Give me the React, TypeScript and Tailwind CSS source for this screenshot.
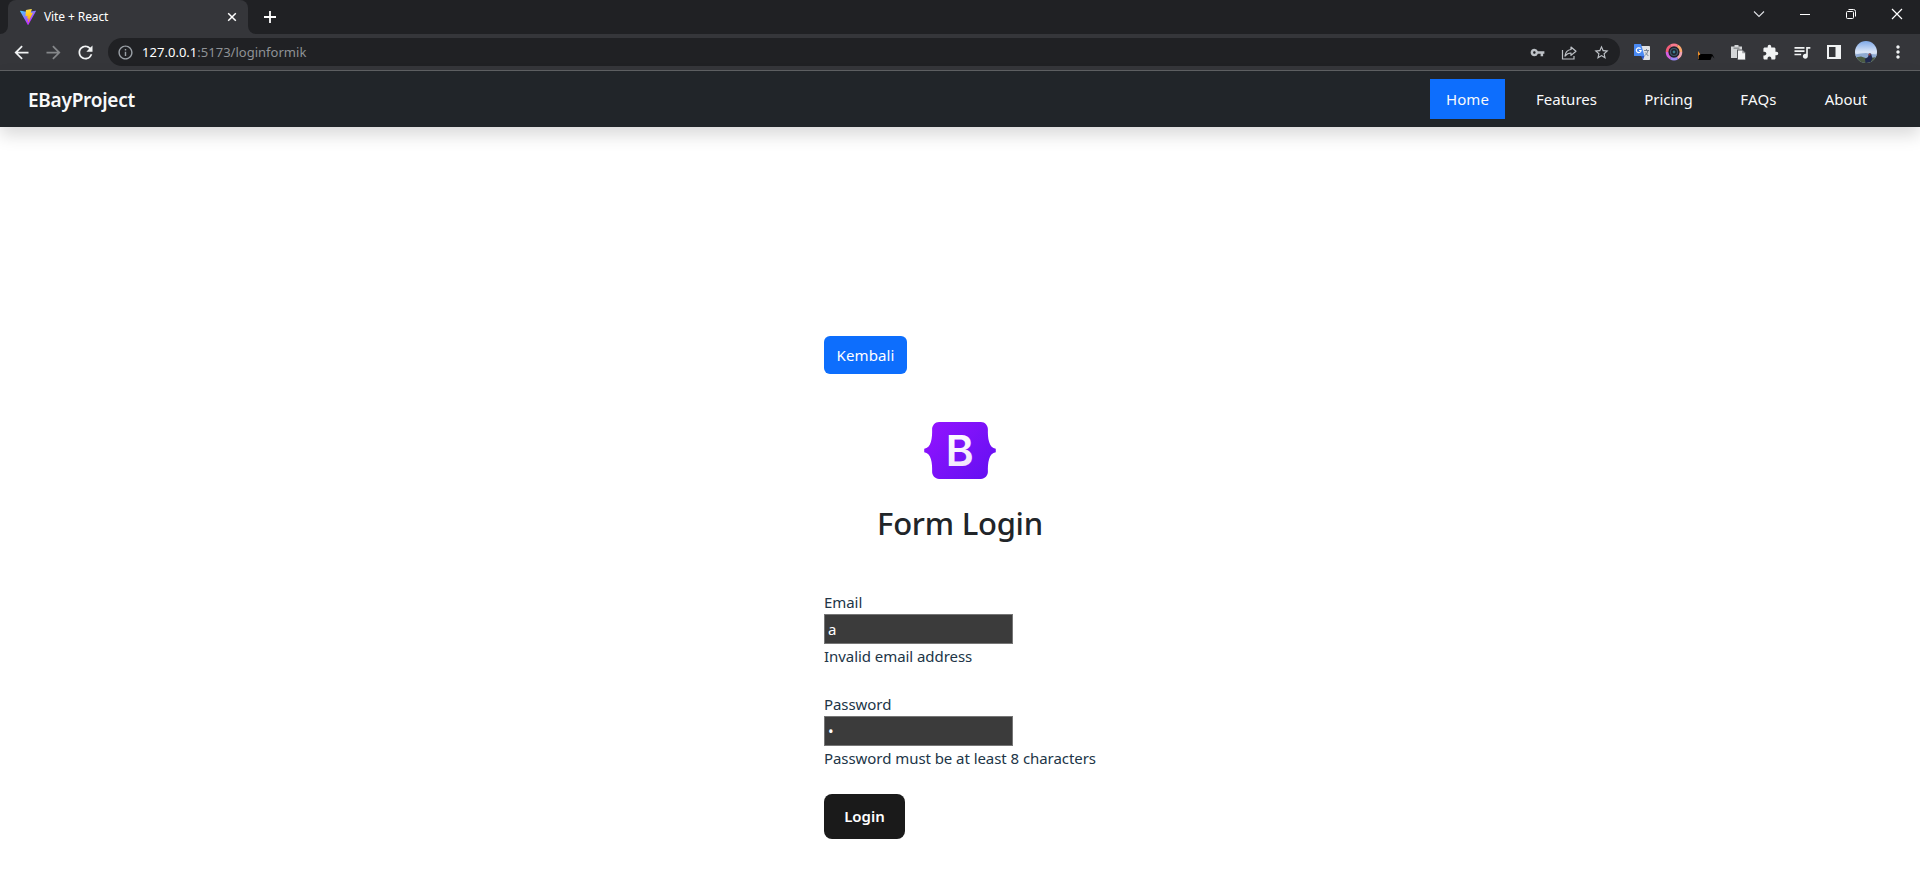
import type { ReactNode } from 'react';
import {
  MdArrowBack,
  MdArrowForward,
  MdExtension,
  MdInfoOutline,
  MdMoreVert,
  MdQueueMusic,
  MdRefresh,
  MdStarBorder,
  MdVpnKey,
} from 'react-icons/md';

function ViteLogo() {
  return (
    <svg width="16" height="16" viewBox="0 0 256 257">
      <defs>
        <linearGradient id="viteBlue" x1="0" y1="0" x2="0.58" y2="0.8">
          <stop offset="0" stopColor="#41D1FF" />
          <stop offset="1" stopColor="#BD34FE" />
        </linearGradient>
        <linearGradient id="viteYellow" x1="0.43" y1="0.02" x2="0.5" y2="0.9">
          <stop offset="0" stopColor="#FFEA83" />
          <stop offset="0.08" stopColor="#FFDD35" />
          <stop offset="1" stopColor="#FFA800" />
        </linearGradient>
      </defs>
      <path fill="url(#viteBlue)" d="M255.153 37.938 134.897 252.976c-2.483 4.44-8.862 4.466-11.382.048L.875 37.958c-2.746-4.814 1.371-10.646 6.827-9.67l120.385 21.517a6.537 6.537 0 0 0 2.322-.004l117.867-21.483c5.438-.991 9.574 4.796 6.877 9.62Z" />
      <path fill="url(#viteYellow)" d="M185.432.063 96.44 17.501a3.268 3.268 0 0 0-2.634 3.014l-5.474 92.456a3.268 3.268 0 0 0 3.997 3.378l24.777-5.718c2.318-.535 4.413 1.507 3.936 3.838l-7.361 36.047c-.495 2.426 1.782 4.5 4.151 3.78l15.304-4.649c2.372-.72 4.652 1.36 4.15 3.788l-11.698 56.621c-.732 3.542 3.979 5.473 5.943 2.437l1.313-2.028 72.516-144.72c1.215-2.423-.88-5.186-3.54-4.672l-25.505 4.922c-2.396.462-4.435-1.77-3.759-4.114l16.646-57.705c.677-2.35-1.37-4.583-3.769-4.113Z" />
    </svg>
  );
}

function BootstrapLogo() {
  return (
    <svg width="72" height="57" viewBox="0 0 118 94" className="mb-[25px]">
      <defs>
        <linearGradient id="bsBody" gradientUnits="userSpaceOnUse" x1="17" y1="2" x2="101" y2="92">
          <stop stopColor="#9013fe" />
          <stop offset="1" stopColor="#6610f2" />
        </linearGradient>
        <linearGradient id="bsLetter" gradientUnits="userSpaceOnUse" x1="42" y1="20" x2="64" y2="74">
          <stop stopColor="#ffffff" />
          <stop offset="1" stopColor="#f1e5fc" />
        </linearGradient>
      </defs>
      <path
        fill="url(#bsBody)"
        d="M24.509 0c-6.733 0-11.715 5.893-11.492 12.284.214 6.14-.064 14.092-2.066 20.577C8.943 39.365 5.547 43.485 0 44.014v5.972c5.547.529 8.943 4.649 10.951 11.153 2.002 6.485 2.28 14.437 2.066 20.577C12.794 88.106 17.776 94 24.51 94H93.5c6.733 0 11.714-5.893 11.491-12.284-.214-6.14.064-14.092 2.066-20.577 2.009-6.504 5.396-10.624 10.943-11.153v-5.972c-5.547-.529-8.934-4.649-10.943-11.153-2.002-6.484-2.28-14.437-2.066-20.577C105.214 5.894 100.233 0 93.5 0H24.508z"
      />
      <text x="35.5" y="72.3" fontSize="70" fontWeight="600" fill="url(#bsLetter)" fontFamily="Inter, sans-serif">
        B
      </text>
    </svg>
  );
}

function Cell({ children }: { children: ReactNode }) {
  return <div className="flex h-8 w-8 shrink-0 items-center justify-center">{children}</div>;
}

function TitleBar() {
  return (
    <div className="flex h-[34px] bg-[#202124] text-white">
      <div className="flex w-2 items-end bg-[#35363a]">
        <div className="h-full w-2 rounded-br-lg bg-[#202124]" />
      </div>
      <div className="bg-[#202124]">
        <div className="flex h-[34px] w-60 items-center rounded-t-lg bg-[#35363a] pr-[9px] pb-[1px] pl-3">
          <ViteLogo />
          <span className="ml-2 grow text-[12px] leading-4 tracking-[-0.1px]">Vite + React</span>
          <svg width="14" height="14" viewBox="0 0 14 14" stroke="#fff" strokeWidth="1.5" className="mt-[1px]">
            <path d="M3.200 3.200l7.600 7.600M10.800 3.200l-7.600 7.600" />
          </svg>
        </div>
      </div>
      <div className="w-2 bg-[#35363a]">
        <div className="h-full w-2 rounded-bl-lg bg-[#202124]" />
      </div>
      <div className="flex w-7 items-center justify-center">
        <svg width="14" height="14" viewBox="0 0 14 14" stroke="#fff" strokeWidth="1.8">
          <path d="M7 1v12M1 7h12" />
        </svg>
      </div>
      <div className="ml-auto flex h-7 items-center">
        <div className="flex w-[46px] justify-center">
          <svg width="12" height="12" viewBox="0 0 12 12" fill="none" stroke="#dfe1e5" strokeWidth="1.1">
            <path d="M1 3.5l5 5 5-5" />
          </svg>
        </div>
        <div className="flex w-[46px] justify-center">
          <div className="mt-[1px] h-px w-[10px] bg-white" />
        </div>
        <div className="flex w-[46px] justify-center">
          <svg width="12" height="12" viewBox="0 0 12 12" fill="none" stroke="#fff">
            <rect x="1.5" y="3.5" width="7" height="7" rx="1" />
            <path d="M3.5 1.5h5a2 2 0 0 1 2 2v5" />
          </svg>
        </div>
        <div className="flex w-[46px] justify-center">
          <svg width="12" height="12" viewBox="0 0 12 12" fill="none" stroke="#fff" strokeWidth="1.2">
            <path d="M1 1l10 10M11 1L1 11" />
          </svg>
        </div>
      </div>
    </div>
  );
}

function TranslateIcon() {
  return (
    <svg width="18" height="18" viewBox="0 0 18 18">
      <path d="M6 3h10.200q.8 0 .8.800v12.400q0 .8-.8.800H10z" fill="#dfe1e5" />
      <path d="M1.500 1H8l3.500 12H1.500q-.5 0-.5-.5v-11q0-.5.5-.5z" fill="#4a8af4" />
      <path d="M8 13h3.500L10 17z" fill="#2a56c6" />
      <path d="M7.600 5.700A2.400 2.400 0 1 0 8.100 7.500H6" fill="none" stroke="#fff" strokeWidth="1.200" />
      <path d="M11 7.500h5M13.500 6v1.500M15 7.500q-.8 3.500-3 5M12.300 9.500l3 3.500" fill="none" stroke="#7b8796" />
    </svg>
  );
}

function CameraRingIcon() {
  return (
    <svg width="18" height="18" viewBox="0 0 18 18" fill="none">
      <circle cx="9" cy="9" r="5.500" fill="#20232b" />
      <g strokeWidth="2.600">
        <path d="M2 9a7 7 0 0 1 3.500-6.060" stroke="#f25c78" />
        <path d="M5.500 2.940A7 7 0 0 1 12.500 2.940" stroke="#f9788c" />
        <path d="M12.500 2.940A7 7 0 0 1 16 9" stroke="#fba86f" />
        <path d="M16 9a7 7 0 0 1-3.500 6.060" stroke="#f0a3b4" />
        <path d="M12.500 15.060a7 7 0 0 1-7 0" stroke="#9a86f5" />
        <path d="M5.500 15.060A7 7 0 0 1 2 9" stroke="#d660e0" />
      </g>
      <circle cx="9" cy="9" r="3.500" stroke="#40586e" strokeWidth="1.200" />
      <circle cx="9" cy="9" r="1.400" fill="#3d7f93" />
    </svg>
  );
}

function HatIcon() {
  return (
    <svg width="18" height="18" viewBox="0 0 18 18">
      <path d="M1 8l2.200 3v5H1z" fill="#f0922b" />
      <path d="M1.500 12.500L4 11h10l1.500.5 2 4-2.500-2.500-1.500 4H1.500z" fill="#000" />
    </svg>
  );
}

function PasteIcon() {
  return (
    <svg width="16" height="16" viewBox="0 0 16 16">
      <path d="M1 2.500h3.500V1h4v1.500H12V14H1z" fill="#d4d6d8" />
      <path d="M3.500 3.500h6v1.300h-6z" fill="#85878a" />
      <path d="M7 5.500h5.500L16 8.500V16H7z" fill="#55575b" />
      <path d="M8 6.500h4.200L15 9.200V15.500H8z" fill="#f4f5f6" />
      <path d="M12.200 6.500V9.200H15z" fill="#9fa1a4" />
    </svg>
  );
}

function Avatar() {
  return (
    <svg width="22" height="22" viewBox="0 0 22 22">
      <defs>
        <clipPath id="avatarClip">
          <circle cx="11" cy="11" r="11" />
        </clipPath>
        <linearGradient id="sky" x1="0" y1="0" x2="0" y2="1">
          <stop stopColor="#7fa9e8" />
          <stop offset="0.5" stopColor="#dbe6f8" />
          <stop offset="1" stopColor="#8fb0d8" />
        </linearGradient>
      </defs>
      <g clipPath="url(#avatarClip)">
        <path d="M0 0h22v22H0z" fill="url(#sky)" />
        <path d="M0 13.500l6-1 5-.5 5 1 6 .5v5H0z" fill="#8faad2" />
        <path d="M0 16.500l6-1 6 2 10-1.500v7H0z" fill="#4b5a42" />
        <path d="M10 18l3-2 1-3.500h2l1.500 5-2 3.500-5 1z" fill="#20284f" />
        <circle cx="14.500" cy="13.500" r="1.100" fill="#a64a45" />
      </g>
    </svg>
  );
}

function Toolbar() {
  return (
    <div className="flex h-9 items-center bg-[#35363a] pr-1.5 pl-[5px] text-[#f1f3f4]">
      <Cell><MdArrowBack size={21} /></Cell>
      <Cell><MdArrowForward size={21} className="text-[#85878a]" /></Cell>
      <Cell><MdRefresh size={21} /></Cell>
      <div className="ml-[7px] flex h-7 grow items-center rounded-full bg-[#202124] pr-[3px] pl-[9px] text-[#bdc1c6]">
        <MdInfoOutline size={17} className="mr-2 text-[#9aa0a6]" />
        <span className="text-[13px] leading-5 tracking-[0.03px] text-white">127.0.0.1</span>
        <span className="grow text-[13px] leading-5 tracking-[0.01px] text-[#8f9296]">:5173/loginformik</span>
        <Cell><MdVpnKey size={15} /></Cell>
        <Cell>
          <svg width="16" height="16" viewBox="0 0 16 16" fill="none" stroke="currentColor" strokeWidth="1.200" className="mt-[1px]">
            <path d="M1.500 5V14h11.500V11" />
            <path d="M10 2l5 4.200-5 4.200V8Q6.500 8 4 11 4.800 5 10 4.500z" strokeLinejoin="round" />
          </svg>
        </Cell>
        <Cell><MdStarBorder size={17} /></Cell>
      </div>
      <div className="ml-1.5 flex">
        <Cell><TranslateIcon /></Cell>
        <Cell><CameraRingIcon /></Cell>
        <Cell><HatIcon /></Cell>
        <Cell><PasteIcon /></Cell>
        <Cell><MdExtension size={17} /></Cell>
        <Cell><MdQueueMusic size={20} /></Cell>
        <Cell>
          <svg width="14" height="14" viewBox="0 0 14 14">
            <path d="M0 0h14v14H0zM2 2v10h6.500V2z" fill="currentColor" fillRule="evenodd" />
          </svg>
        </Cell>
        <Cell><Avatar /></Cell>
        <Cell><MdMoreVert size={20} /></Cell>
      </div>
    </div>
  );
}

const links = [
  { label: 'Home', style: 'w-[75px] bg-[#0d6efd] tracking-[0.1px]' },
  { label: 'Features', style: 'w-[91px]' },
  { label: 'Pricing', style: 'w-[80px] pl-px' },
  { label: 'FAQs', style: 'w-[68px] pl-px tracking-[0.2px]' },
  { label: 'About', style: 'w-[76px]' },
];

function NavBar() {
  return (
    <header className="flex h-14 items-center justify-between bg-[#212529] pr-9 pl-7 shadow-[0_8px_16px_rgba(0,0,0,0.15)]">
      <span className="pt-0.5 text-[19px] font-semibold tracking-[-0.25px] text-[#f8f9fa]">EBayProject</span>
      <nav className="flex gap-4 text-[15px] text-[#f8f9fa]">
        {links.map((l) => (
          <a key={l.label} className={'flex h-10 items-center justify-center ' + l.style}>
            {l.label}
          </a>
        ))}
      </nav>
    </header>
  );
}

function Field({ label, type, value, error }: { label: string; type: string; value: string; error: string }) {
  return (
    <div className="mb-6 flex flex-col items-start">
      <label className="h-6 leading-6 tracking-[-0.06px]">{label}</label>
      <input
        type={type}
        defaultValue={value}
        className="h-[30px] w-[189px] border border-[#767676] bg-[#3b3b3b] px-[3px] text-white outline-none"
      />
      <div className="h-6 leading-6 tracking-[-0.06px] whitespace-nowrap">{error}</div>
    </div>
  );
}

export default function App() {
  return (
    <div className="flex h-[885px] flex-col overflow-hidden bg-white font-['Noto_Sans','Open_Sans',sans-serif]">
      <TitleBar />
      <Toolbar />
      <div className="h-px shrink-0 bg-[#5f6163]" />
      <NavBar />
      <main className="mx-auto flex w-[272px] flex-col items-start pt-[209px] text-[15px] text-[#213547]">
        <button className="h-[38px] w-[83px] rounded-md bg-[#0d6efd] tracking-[0.1px] text-white">Kembali</button>
        <div className="mt-12 flex w-full flex-col items-center">
          <BootstrapLogo />
          <h2 className="text-[31px] leading-[38px] font-medium tracking-[-0.25px] text-[#212529]">Form Login</h2>
        </div>
        <form className="mt-12 flex flex-col items-start">
          <Field label="Email" type="email" value="a" error="Invalid email address" />
          <Field label="Password" type="password" value="1" error="Password must be at least 8 characters" />
          <button type="button" className="h-[45px] w-[81px] rounded-lg bg-[#1a1a1a] font-semibold text-white">
            Login
          </button>
        </form>
      </main>
    </div>
  );
}
